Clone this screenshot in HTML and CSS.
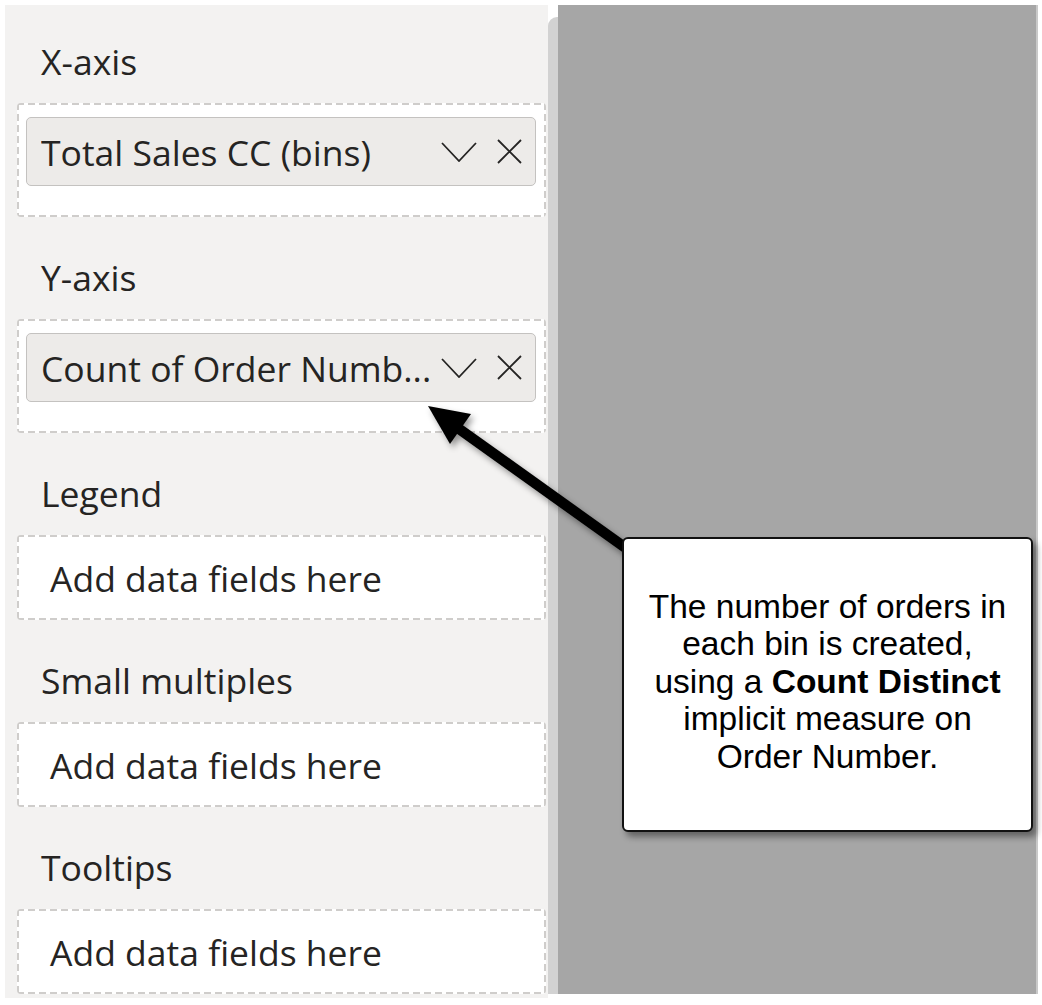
FILE: index.html
```html
<!DOCTYPE html>
<html lang="en">
<head>
<meta charset="utf-8">
<title>Fields pane</title>
<link rel="stylesheet" href="styles.css">
</head>
<body>
<div class="screen">
  <aside class="pane">
    <section class="well">
      <div class="well-label">X-axis</div>
      <div class="drop drop-filled">
        <div class="chip">
          <span class="chip-text">Total Sales CC (bins)</span>
          <svg class="icon-chevron" width="36" height="20" viewBox="0 0 36 20"><path d="M1 1 L18 19 L35 1" fill="none" stroke="#252423" stroke-width="1.8"/></svg>
          <svg class="icon-close" width="25" height="25" viewBox="0 0 25 25"><path d="M1 1 L24 24 M24 1 L1 24" fill="none" stroke="#252423" stroke-width="1.8"/></svg>
        </div>
      </div>
    </section>
    <section class="well">
      <div class="well-label">Y-axis</div>
      <div class="drop drop-filled">
        <div class="chip">
          <span class="chip-text">Count of Order Numb...</span>
          <svg class="icon-chevron" width="36" height="20" viewBox="0 0 36 20"><path d="M1 1 L18 19 L35 1" fill="none" stroke="#252423" stroke-width="1.8"/></svg>
          <svg class="icon-close" width="25" height="25" viewBox="0 0 25 25"><path d="M1 1 L24 24 M24 1 L1 24" fill="none" stroke="#252423" stroke-width="1.8"/></svg>
        </div>
      </div>
    </section>
    <section class="well">
      <div class="well-label">Legend</div>
      <div class="drop drop-empty">Add data fields here</div>
    </section>
    <section class="well">
      <div class="well-label">Small multiples</div>
      <div class="drop drop-empty">Add data fields here</div>
    </section>
    <section class="well">
      <div class="well-label">Tooltips</div>
      <div class="drop drop-empty">Add data fields here</div>
    </section>
  </aside>
  <div class="gutter"></div>
  <main class="canvas"></main>
  <div class="edge"></div>
</div>

<svg class="arrow" width="1042" height="1005" viewBox="0 0 1042 1005">
  <line x1="630" y1="551" x2="455" y2="426" stroke="#000" stroke-width="10.5"/>
  <polygon points="428,406 471,414 450,444" fill="#000"/>
</svg>

<div class="callout">
  <p class="callout-text">The number of orders in<br>each bin is created,<br>using a <b>Count Distinct</b><br>implicit measure on<br>Order Number.</p>
</div>
</body>
</html>
```

FILE: styles.css
```css
* { box-sizing: border-box; }

html, body {
  margin: 0;
  padding: 0;
  background: #ffffff;
}

body {
  width: 1042px;
  height: 1005px;
  overflow: hidden;
  position: relative;
  font-family: "Open Sans", "Noto Sans", sans-serif;
  color: #252423;
}

.screen {
  display: flex;
  align-items: flex-start;
  padding: 5px 0 0 5px;
  height: 1005px;
}

.pane {
  width: 543px;
  height: 993px;
  flex: none;
  background: #f3f2f1;
  padding: 34px 0 0 12px;
  display: flex;
  flex-direction: column;
  gap: 38px;
}

.well {
  display: flex;
  flex-direction: column;
  gap: 20px;
}

.well-label {
  font-size: 35.5px;
  line-height: 44px;
  height: 44px;
  padding-left: 24px;
  white-space: nowrap;
}

.drop {
  --dash: #cfcdcb;
  width: 529px;
  border-radius: 4px;
  background:
    linear-gradient(90deg, var(--dash) 7px, transparent 7px) 0 0 / 11px 2px repeat-x,
    linear-gradient(90deg, var(--dash) 7px, transparent 7px) 0 100% / 11px 2px repeat-x,
    linear-gradient(180deg, var(--dash) 7px, transparent 7px) 0 0 / 2px 11px repeat-y,
    linear-gradient(180deg, var(--dash) 7px, transparent 7px) 100% 0 / 2px 11px repeat-y,
    #ffffff;
}

.drop-filled {
  height: 114px;
  padding: 14px 10px 0 9px;
}

.drop-empty {
  height: 85px;
  display: flex;
  align-items: center;
  padding-left: 33px;
  font-size: 35.5px;
  white-space: nowrap;
}

.chip {
  height: 69px;
  background: #edebe9;
  border: 1px solid #c4c2c0;
  border-radius: 5px;
  display: flex;
  align-items: center;
  padding: 0 13px 0 14px;
}

.chip-text {
  flex: 1;
  min-width: 0;
  font-size: 35.5px;
  white-space: nowrap;
  overflow: hidden;
}

.icon-chevron {
  flex: none;
  margin-right: 20px;
}

.icon-close {
  flex: none;
}

.gutter {
  width: 10px;
  height: 977px;
  margin-top: 12px;
  flex: none;
  background: #d2d2d2;
  border-top-left-radius: 9px;
}

.canvas {
  width: 478px;
  height: 989px;
  flex: none;
  background: #a6a6a6;
}

.edge {
  width: 2px;
  height: 989px;
  flex: none;
  background: #c9c9c9;
}

.arrow {
  position: absolute;
  left: 0;
  top: 0;
  pointer-events: none;
  filter: drop-shadow(3px 4px 3px rgba(0, 0, 0, 0.4));
}

.callout {
  position: absolute;
  left: 622px;
  top: 537px;
  width: 411px;
  height: 295px;
  background: #ffffff;
  border: 2px solid #111111;
  border-radius: 6px;
  box-shadow: 4px 5px 6px rgba(0, 0, 0, 0.4);
  display: flex;
  align-items: center;
  justify-content: center;
}

.callout-text {
  margin: 0;
  font-family: "Liberation Sans", Arial, sans-serif;
  font-size: 33.5px;
  line-height: 37.5px;
  text-align: center;
  color: #000000;
  padding-bottom: 6px;
}

.callout-text b {
  font-weight: 700;
}
```
